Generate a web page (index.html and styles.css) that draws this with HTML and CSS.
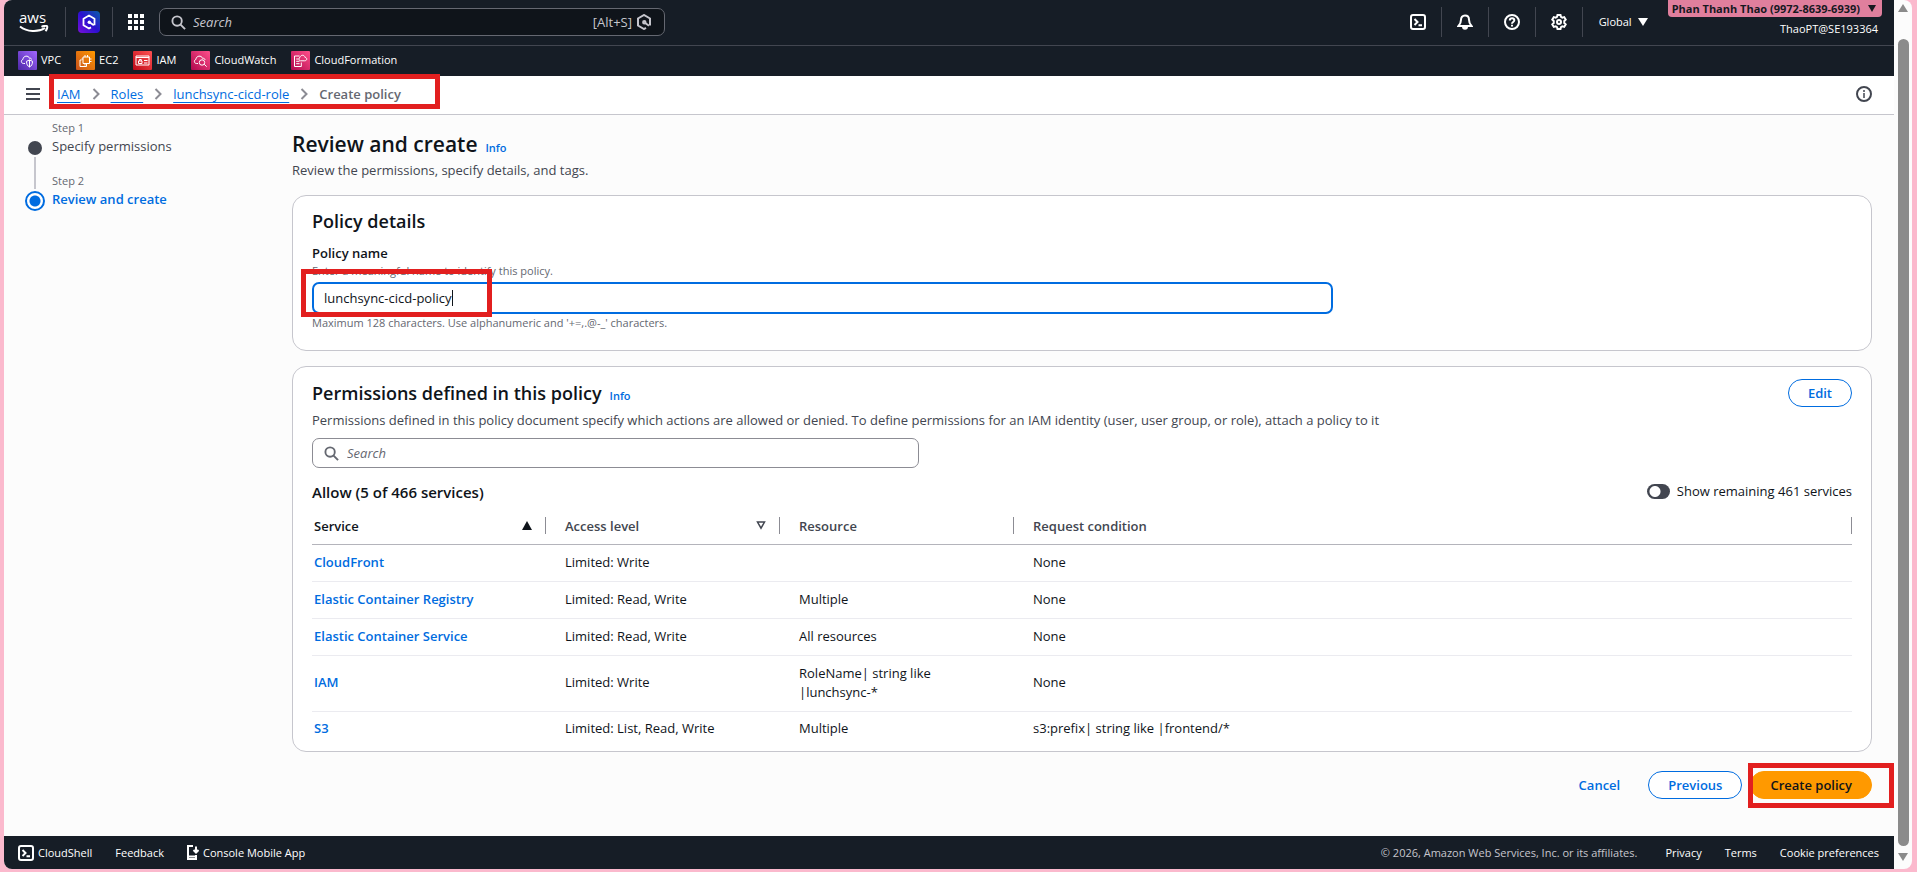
FILE: index.html
```html
<!DOCTYPE html>
<html lang="en">
<head>
    <meta charset="UTF-8">
    <meta name="viewport" content="width=device-width, initial-scale=1.0">
    <title>Create policy | IAM | Global</title>
    <link rel="stylesheet" href="styles.css">
</head>
<body>

    <!-- Shared icons -->
    <svg class="sprite" aria-hidden="true">
        <symbol id="i-search" viewBox="0 0 16 16"><circle cx="6.5" cy="6.5" r="5"/><path d="M10.2 10.2 15 15"/></symbol>
        <symbol id="i-shell" viewBox="0 0 16 16"><rect x="1" y="1" width="14" height="14" rx="2"/><path d="M4.5 5 7.5 8l-3 3M8.5 11.2h3.5"/></symbol>
        <symbol id="i-chevron" viewBox="0 0 8 12"><path d="M1.5 1 6.5 6l-5 5"/></symbol>
        <symbol id="i-hexq" viewBox="0 0 16 16"><path d="M10 13.800 8 15 2 11.500v-7L8 1l6 3.500v7M8.500 8.500l4.500 3.300"/><circle cx="8.300" cy="8.300" r="1.200"/></symbol>
    </svg>

    <div id="window">
        <div id="app">
            <header>
                <div class="topbar">
                    <a class="aws" href="#" aria-label="AWS home">
                        <span>aws</span>
                        <svg width="30" height="8" viewBox="0 0 30 8"><path d="M1 1.5C8 7 19 7.5 26 3"/><path d="M22.5 1.8c2-1 5-1.2 5.6-.6.5.8-.2 3.4-1.6 5"/></svg>
                    </a>
                    <button class="q-btn" aria-label="Amazon Q">
                        <svg class="q-icon" width="22" height="22" viewBox="0 0 22 22">
                            <defs><linearGradient id="gq" x1="1" y1="0" x2="0" y2="1"><stop offset="0" stop-color="#0a5fa8"/><stop offset=".5" stop-color="#2a10d0"/><stop offset="1" stop-color="#7a10d8"/></linearGradient></defs>
                            <rect width="22" height="22" rx="4" fill="url(#gq)"/>
                            <path d="M13 16.400 11 17.500 5.500 14.300V7.700L11 4.500l5.500 3.200v6.600M11.500 11.300l4.300 3" fill="none" stroke="#fff" stroke-width="1.800" stroke-linejoin="round"/>
                            <circle cx="11.300" cy="11.200" r="1.700" fill="#fff"/>
                        </svg>
                    </button>
                    <button class="grid-btn" aria-label="Services">
                        <svg width="16" height="16" viewBox="0 0 16 16" fill="#fff"><path d="M0 0h4v4H0zM6 0h4v4H6zM12 0h4v4h-4zM0 6h4v4H0zM6 6h4v4H6zM12 6h4v4h-4zM0 12h4v4H0zM6 12h4v4H6zM12 12h4v4h-4z"/></svg>
                    </button>
                    <div class="global-search">
                        <svg class="line-icon" width="15" height="15"><use href="#i-search"/></svg>
                        <input type="search" placeholder="Search" aria-label="Search services">
                        <kbd>[Alt+S]</kbd>
                        <svg class="line-icon" width="16" height="16"><use href="#i-hexq"/></svg>
                    </div>
                    <div class="tools">
                        <button aria-label="CloudShell"><svg class="line-icon" width="16" height="16"><use href="#i-shell"/></svg></button>
                        <button aria-label="Notifications"><svg class="line-icon" width="16" height="16" viewBox="0 0 16 16"><path d="M8 1.5c-2.6 0-4 1.9-4 4.2C4 9 2.800 10.500 1.500 12h13C13.200 10.500 12 9 12 5.700 12 3.400 10.600 1.500 8 1.500z"/><path d="M6 12.500c0 3 4 3 4 0z" fill="#fff"/></svg></button>
                        <button aria-label="Help"><svg class="line-icon" width="16" height="16" viewBox="0 0 16 16"><circle cx="8" cy="8" r="7"/><path d="M5.800 6.500c0-3 4.500-2.800 4.500-.2C10.300 8 8 8 8 9.800M8 10.800v1.700"/></svg></button>
                        <button aria-label="Settings"><svg class="line-icon" width="16" height="16" viewBox="0 0 16 16"><path d="M6.500 1h3l.5 1.900 1.300.7 1.900-.5 1.500 2.500L13.300 7v2l1.400 1.400-1.500 2.500-1.900-.5-1.300.7-.5 1.900h-3L6 13.100l-1.300-.7-1.900.5-1.500-2.500L2.700 9V7L1.300 5.600l1.500-2.500 1.900.5L6 2.900z"/><circle cx="8" cy="8" r="2"/></svg></button>
                        <button class="region">Global <svg width="10" height="8" viewBox="0 0 10 8"><path d="M0 0h10L5 8z" fill="#fff"/></svg></button>
                    </div>
                    <div class="account">
                        <button class="account-name">Phan Thanh Thao (9972-8639-6939) <svg width="8" height="7" viewBox="0 0 8 7"><path d="M0 0h8L4 7z" fill="#16191f"/></svg></button>
                        <span class="user">ThaoPT@SE193364</span>
                    </div>
                </div>

                <nav class="favorites" aria-label="Favorites">
                    <a href="#"><svg class="vpc" viewBox="0 0 19 19"><path d="M7 12.500H5.500c-2.500 0-2.900-3.500-.6-4 .2-4 5.600-4.500 6.600-1.200 1-.5 2 .2 2 1.200M8.500 10.300 11.500 9l3 1.300c0 3-1 4.700-3 5.700-2-1-3-2.700-3-5.700zM11.500 9v7"/></svg>VPC</a>
                    <a href="#"><svg class="ec2" viewBox="0 0 19 19"><path d="M7 6h6.500v6.500H7zM9 6V4M11.500 6V4M13.500 8h2M13.500 10.500h2M9 12.500v2M7 8H5.500M5.500 9H4v6.500h6.500V13"/></svg>EC2</a>
                    <a href="#"><svg class="iam" viewBox="0 0 19 19"><path d="M3 5h13v9H3zM3 6.500h13M5.500 10h3.500v2.500H5.500zM6.300 10V8.500h2V10M11 9.500h3.500M11 12h3.500"/></svg>IAM</a>
                    <a href="#"><svg class="cw" viewBox="0 0 19 19"><path d="M7 12.500H5.500c-2.500 0-2.900-3.500-.6-4 .2-4 5.600-4.500 6.600-1.200 1.500-.3 2.500.5 2.500 1.700M13.200 13.200l2.500 2.500"/><circle cx="11" cy="11.500" r="2.700"/></svg>CloudWatch</a>
                    <a href="#"><svg class="cf" viewBox="0 0 19 19"><path d="M8.500 5H3.500v10.500h6.800V11.500M5.200 8h2M5.200 10.300h3.300M5.200 12.700h3.300M9.500 9.800h4c3 0 2.800-3.300.5-3.400-.5-3-4.500-2.700-5 0-1.800.3-1.500 3.200.5 3.400z"/></svg>CloudFormation</a>
                </nav>
            </header>

            <div class="crumb-bar">
                <button class="menu-btn" aria-label="Open navigation"><svg width="14" height="12" viewBox="0 0 14 12"><path d="M0 1h14M0 6h14M0 11h14" stroke="#424650" stroke-width="2"/></svg></button>
                <nav class="crumbs" aria-label="Breadcrumbs">
                    <a href="#">IAM</a>
                    <svg width="8" height="12"><use href="#i-chevron"/></svg>
                    <a href="#">Roles</a>
                    <svg width="8" height="12"><use href="#i-chevron"/></svg>
                    <a href="#">lunchsync-cicd-role</a>
                    <svg width="8" height="12"><use href="#i-chevron"/></svg>
                    <span>Create policy</span>
                    <div class="mark mark-crumbs"></div>
                </nav>
                <button class="info-btn" aria-label="Info panel"><svg width="16" height="16" viewBox="0 0 16 16" fill="none" stroke="#424650" stroke-width="2"><circle cx="8" cy="8" r="7"/><path d="M8 7v5M8 4v2" stroke-width="1.500"/></svg></button>
            </div>

            <div class="content">
                <ol class="steps">
                    <li>
                        <small>Step 1</small>
                        <a href="#">Specify permissions</a>
                    </li>
                    <li class="current">
                        <small>Step 2</small>
                        <span>Review and create</span>
                    </li>
                </ol>

                <main>
                    <div class="title-row">
                        <h1>Review and create</h1>
                        <a class="info" href="#">Info</a>
                    </div>
                    <p class="description">Review the permissions, specify details, and tags.</p>

                    <section class="card details">
                        <h2>Policy details</h2>
                        <label for="policy-name">Policy name</label>
                        <p class="hint">Enter a meaningful name to identify this policy.</p>
                        <div class="name-field">
                            <input id="policy-name" type="text" value="lunchsync-cicd-policy">
                            <span class="caret"></span>
                            <div class="mark mark-name"></div>
                        </div>
                        <p class="hint">Maximum 128 characters. Use alphanumeric and '+=,.@-_' characters.</p>
                    </section>

                    <section class="card permissions">
                        <div class="card-head">
                            <div class="title-row">
                                <h2>Permissions defined in this policy</h2>
                                <a class="info" href="#">Info</a>
                            </div>
                            <button class="btn">Edit</button>
                        </div>
                        <p class="description">Permissions defined in this policy document specify which actions are allowed or denied. To define permissions for an IAM identity (user, user group, or role), attach a policy to it</p>
                        <div class="filter">
                            <svg class="line-icon" width="15" height="15"><use href="#i-search"/></svg>
                            <input type="search" placeholder="Search" aria-label="Search permissions">
                        </div>
                        <div class="allow-row">
                            <h3>Allow (5 of 466 services)</h3>
                            <label class="toggle"><input type="checkbox" role="switch">Show remaining 461 services</label>
                        </div>
                        <table>
                            <thead>
                                <tr>
                                    <th class="sorted"><div>Service <svg width="10" height="9" viewBox="0 0 10 9"><path d="M0 9h10L5 0z" fill="#0f141a"/></svg></div></th>
                                    <th><div>Access level <svg width="10" height="9" viewBox="0 0 10 9"><path d="M1.500 1h7L5 7.200z" fill="none" stroke="#424650" stroke-width="1.500"/></svg></div></th>
                                    <th><div>Resource</div></th>
                                    <th class="wide"><div>Request condition</div></th>
                                </tr>
                            </thead>
                            <tbody>
                                <tr><td><a href="#">CloudFront</a></td><td>Limited: Write</td><td></td><td>None</td></tr>
                                <tr><td><a href="#">Elastic Container Registry</a></td><td>Limited: Read, Write</td><td>Multiple</td><td>None</td></tr>
                                <tr><td><a href="#">Elastic Container Service</a></td><td>Limited: Read, Write</td><td>All resources</td><td>None</td></tr>
                                <tr><td><a href="#">IAM</a></td><td>Limited: Write</td><td>RoleName| string like<br>|lunchsync-*</td><td>None</td></tr>
                                <tr><td><a href="#">S3</a></td><td>Limited: List, Read, Write</td><td>Multiple</td><td>s3:prefix| string like |frontend/*</td></tr>
                            </tbody>
                        </table>
                    </section>

                    <div class="actions">
                        <button class="btn link">Cancel</button>
                        <button class="btn">Previous</button>
                        <div class="primary-wrap">
                            <button class="btn primary">Create policy</button>
                            <div class="mark mark-create"></div>
                        </div>
                    </div>
                </main>
            </div>

            <footer>
                <a class="shell" href="#"><svg class="line-icon" width="16" height="16"><use href="#i-shell"/></svg>CloudShell</a>
                <a href="#">Feedback</a>
                <a class="mobile" href="#"><svg class="line-icon" width="12" height="15" viewBox="0 0 12 15"><path d="M6 1H1v13h8v-4M1 11.500h8M9 1.500V7M6.500 5 9 7.500 11.500 5"/></svg>Console Mobile App</a>
                <span class="copyright">© 2026, Amazon Web Services, Inc. or its affiliates.</span>
                <a href="#">Privacy</a>
                <a href="#">Terms</a>
                <a href="#">Cookie preferences</a>
            </footer>
        </div>

        <div id="scrollbar" aria-hidden="true">
            <svg width="10" height="8" viewBox="0 0 10 8"><path d="M5 0l5 8H0z" fill="#8b8b8b"/></svg>
            <div class="thumb"></div>
            <svg width="10" height="8" viewBox="0 0 10 8"><path d="M0 0h10L5 8z" fill="#8b8b8b"/></svg>
        </div>
    </div>

</body>
</html>
```
FILE: styles.css
```css
* {
    box-sizing: border-box;
}

body {
    margin: 0;
    padding: 0 5px 3px 4px;
    min-height: 100vh;
    display: flex;
    background: #fbb9cd;
    font-family: "Open Sans", "Noto Sans", sans-serif;
    font-size: 13px;
    line-height: 18px;
    color: #0f141a;
}

h1, h2, h3, p, ol {
    margin: 0;
    padding: 0;
}

h1, h2, h3, th {
    font-weight: 600;
}

a {
    color: #006ce0;
    text-decoration: none;
}

button, input {
    font: inherit;
    color: inherit;
}

button {
    padding: 0;
    border: none;
    background: none;
    cursor: pointer;
}

svg {
    display: block;
    flex: none;
}

.sprite {
    position: absolute;
    width: 0;
    height: 0;
}

.line-icon {
    fill: none;
    stroke: currentColor;
    stroke-width: 2;
}

#window {
    flex: 1;
    display: flex;
    border-radius: 8px;
    overflow: hidden;
    background: #fcfcfc;
}

#app {
    flex: 1;
    min-width: 0;
    display: flex;
    flex-direction: column;
}

/* Header */
header {
    background: #161d26;
    color: #fff;
}

.topbar {
    display: flex;
    align-items: center;
    height: 46px;
    padding-bottom: 1px;
    border-bottom: 1px solid #424650;
}

.aws {
    width: 61px;
    padding-left: 15px;
    color: #fff;
}

.aws span {
    display: block;
    height: 12px;
    font-size: 15px;
    font-weight: 500;
    line-height: 10px;
}

.aws svg {
    margin-top: 1px;
    fill: none;
    stroke: #fff;
    stroke-width: 2;
}

.q-btn, .grid-btn {
    display: flex;
    align-items: center;
    justify-content: center;
    height: 30px;
    width: 47px;
    border-left: 1px solid #424650;
}

.global-search {
    display: flex;
    align-items: center;
    width: 506px;
    height: 28px;
    padding: 0 12px 0 11px;
    border: 1px solid #656871;
    border-radius: 7px;
    background: #0f141a;
    color: #c6c6cd;
}

.global-search input {
    flex: 1;
    min-width: 0;
    padding: 0 7px;
    border: none;
    outline: none;
    background: none;
}

input::placeholder {
    color: inherit;
    opacity: 1;
    font-style: italic;
}

kbd {
    margin-right: 4px;
    font: inherit;
}

.tools {
    display: flex;
    align-items: center;
    margin-left: auto;
}

.tools button {
    display: flex;
    align-items: center;
    justify-content: center;
    width: 47px;
    height: 30px;
    border-right: 1px solid #424650;
}

.tools .region {
    width: 65px;
    margin-right: 20px;
    justify-content: flex-end;
    gap: 6px;
    border: none;
    font-size: 11px;
}

.account {
    align-self: flex-start;
    display: flex;
    flex-direction: column;
    align-items: flex-end;
    padding-right: 12px;
}

.account-name {
    display: flex;
    align-items: center;
    gap: 8px;
    height: 17px;
    padding: 0 6px 0 4px;
    border-radius: 0 0 4px 4px;
    background: #e07f9d;
    color: #16191f;
    font-size: 11px;
    font-weight: 700;
}

.user {
    padding: 3px 4px 0 0;
    font-size: 11px;
}

.favorites {
    display: flex;
    align-items: center;
    gap: 15px;
    height: 30px;
    padding: 0 0 2px 14px;
    font-size: 11px;
}

.favorites a {
    display: flex;
    align-items: center;
    gap: 4px;
    color: #fff;
}

.favorites svg {
    width: 19px;
    height: 19px;
    border-radius: 1px;
    fill: none;
    stroke: #fff;
}

.vpc {
    background: linear-gradient(45deg, #4d27a8, #a166ff);
}

.ec2 {
    background: linear-gradient(45deg, #c8511b, #ff9900);
}

.iam {
    background: linear-gradient(45deg, #bd0816, #ff5252);
}

.cw, .cf {
    background: linear-gradient(45deg, #b0084d, #ff4f8b);
}

/* Breadcrumbs */
.crumb-bar {
    display: flex;
    align-items: center;
    height: 39px;
    padding: 0 22px 2px;
    border-bottom: 1px solid #c6c6cd;
    background: #fff;
}

.crumbs {
    position: relative;
    display: flex;
    align-items: center;
    gap: 11px;
    margin-left: 17px;
}

.crumbs a {
    text-decoration: underline;
    text-underline-offset: 3px;
}

.crumbs span {
    color: #656871;
    font-weight: 600;
}

.crumbs svg {
    fill: none;
    stroke: #8c8c94;
    stroke-width: 2;
}

.info-btn {
    margin-left: auto;
}

/* Red highlight frames */
.mark {
    position: absolute;
    border: 5px solid #e21f1f;
    pointer-events: none;
}

.mark-crumbs {
    inset: -11px -39px -6px -8px;
}

.mark-name {
    top: -13px;
    left: -11px;
    width: 191px;
    height: 48px;
}

.mark-create {
    inset: -8px -22px -9px -2px;
}

/* Page content */
.content {
    flex: 1;
    display: flex;
    padding-right: 22px;
}

.steps {
    width: 288px;
    padding: 4px 0 0 48px;
    list-style: none;
}

.steps li {
    position: relative;
    height: 53px;
    color: #424650;
}

.steps small {
    display: block;
    font-size: 11px;
    color: #656871;
}

.steps a {
    color: #424650;
}

.steps li::before {
    content: "";
    position: absolute;
    left: -24px;
    top: 22px;
    width: 14px;
    height: 14px;
    border-radius: 50%;
    background: #424650;
}

.steps li:first-child::after {
    content: "";
    position: absolute;
    left: -18px;
    top: 38px;
    width: 2px;
    height: 32px;
    background: #c6c6cd;
}

.steps .current {
    color: #006ce0;
    font-weight: 600;
}

.steps .current small {
    font-weight: 400;
}

.steps .current::before {
    left: -27px;
    top: 19px;
    width: 16px;
    height: 16px;
    border: 2px solid #006ce0;
    background: radial-gradient(#006ce0 5px, #fff 6px);
}

main {
    flex: 1;
    min-width: 0;
    padding: 15px 0 36px;
}

.title-row {
    display: flex;
    align-items: baseline;
    gap: 8px;
}

h1 {
    font-size: 21px;
    line-height: 28px;
}

h2 {
    font-size: 18px;
    line-height: 24px;
}

h3 {
    font-size: 15px;
    line-height: 18px;
}

.info {
    font-size: 11px;
    font-weight: 600;
}

.description {
    color: #424650;
}

main > .description {
    margin: 3px 0 16px;
}

.card {
    border: 1px solid #c6c6cd;
    border-radius: 14px;
    background: #fff;
    padding: 13px 19px;
}

.details {
    height: 156px;
    margin-bottom: 15px;
}

.details label {
    display: block;
    margin-top: 11px;
    font-weight: 600;
}

.hint {
    font-size: 11px;
    line-height: 18px;
    color: #656871;
}

.name-field {
    position: relative;
    width: 66.3%;
    margin-top: 2px;
}

.name-field input {
    display: block;
    width: 100%;
    height: 32px;
    padding: 0 10px;
    border: 2px solid #006ce0;
    border-radius: 7px;
    outline: none;
    background: #fff;
}

.caret {
    position: absolute;
    left: 140px;
    top: 8px;
    width: 1px;
    height: 16px;
    background: #0f141a;
}

.permissions {
    padding: 12px 19px 4px;
}

.card-head {
    display: flex;
    justify-content: space-between;
    align-items: center;
}

.permissions .description {
    margin: 4px 0 9px;
}

.btn {
    height: 28px;
    padding: 0 19px;
    border: 1px solid #006ce0;
    border-radius: 14px;
    background: #fff;
    color: #006ce0;
    font-weight: 600;
}

.filter {
    display: flex;
    align-items: center;
    gap: 8px;
    width: 607px;
    height: 30px;
    padding: 0 11px;
    border: 1px solid #8c8c94;
    border-radius: 7px;
    color: #656871;
}

.filter input {
    flex: 1;
    padding: 0;
    border: none;
    outline: none;
    background: none;
}

.allow-row {
    display: flex;
    justify-content: space-between;
    margin-top: 15px;
}

.toggle {
    display: flex;
    align-items: center;
    gap: 7px;
    height: 16px;
}

.toggle input {
    appearance: none;
    width: 23px;
    height: 15px;
    margin: 0;
    border-radius: 8px;
    background: radial-gradient(circle at 8px 50%, #fff 5px, #424650 6px);
}

table {
    width: 100%;
    margin-top: 7px;
    border-collapse: collapse;
    table-layout: fixed;
}

th {
    width: 234px;
    height: 36px;
    padding: 0;
    border-bottom: 1px solid #b4b4bb;
    text-align: left;
    color: #424650;
}

.sorted {
    color: #0f141a;
}

.wide {
    width: auto;
}

th div {
    display: flex;
    align-items: center;
    justify-content: space-between;
    height: 17px;
    padding: 0 13px 0 19px;
    border-right: 1px solid #8c8c94;
}

td {
    padding: 8px 19px 9px;
    line-height: 19px;
    border-bottom: 1px solid #ebebf0;
}

tr > :first-child {
    padding-left: 2px;
}

.sorted div {
    padding-left: 0;
}

tbody tr:last-child td {
    padding: 7px 19px 9px;
    border-bottom: none;
}

tbody tr:last-child td:first-child {
    padding-left: 2px;
}

td a {
    font-weight: 600;
}

.actions {
    display: flex;
    justify-content: flex-end;
    gap: 8px;
    margin-top: 19px;
}

.link {
    border-color: transparent;
    background: none;
}

.primary-wrap {
    position: relative;
}

.primary {
    border-color: #ff9900;
    background: #ff9900;
    color: #0f141a;
}

/* Footer */
footer {
    display: flex;
    align-items: center;
    gap: 23px;
    height: 33px;
    padding: 0 15px 0 14px;
    background: #161d26;
    color: #c6c6cd;
    font-size: 11px;
}

footer a {
    display: flex;
    align-items: center;
    gap: 4px;
    color: #fff;
}

.copyright {
    margin-left: auto;
    margin-right: 5px;
}

/* Scrollbar */
#scrollbar {
    width: 18px;
    display: flex;
    flex-direction: column;
    align-items: center;
    gap: 7px;
    padding: 4px 0 8px;
}

.thumb {
    flex: 1;
    width: 11px;
    margin-top: 20px;
    border-radius: 6px;
    background: #8b8b8b;
}
```
